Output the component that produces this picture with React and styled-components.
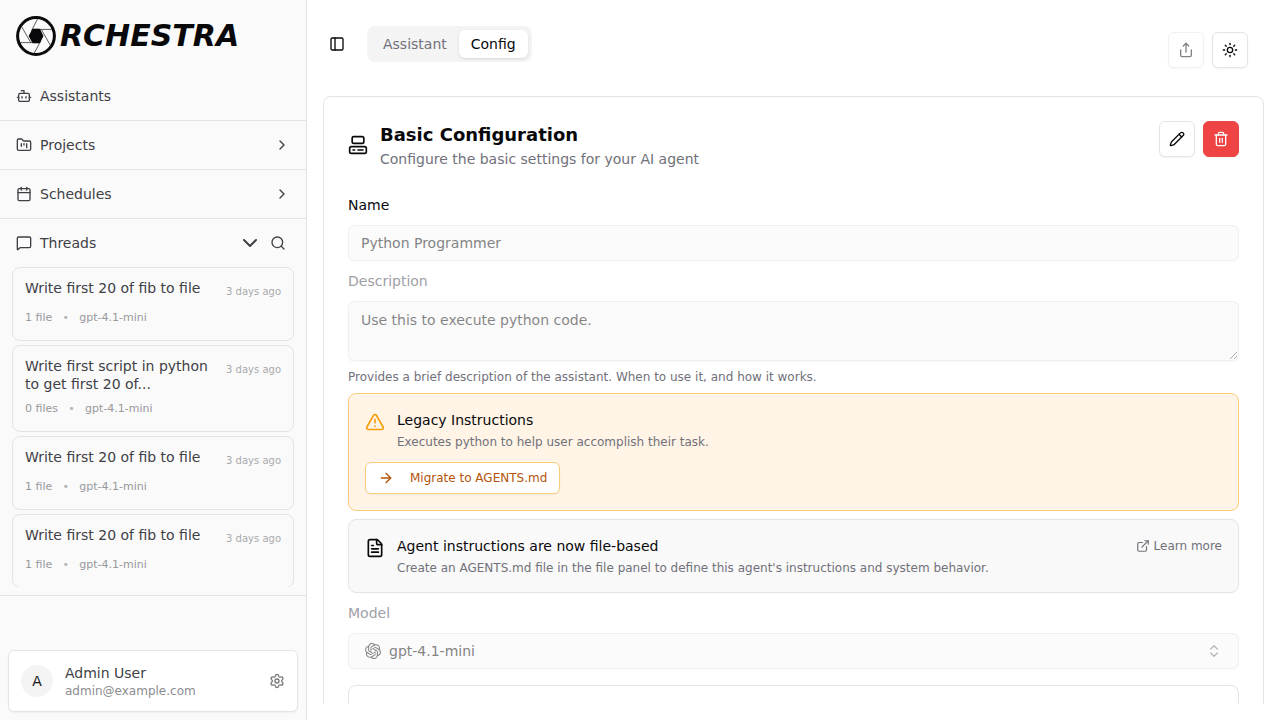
import React from 'react';
import styled, { createGlobalStyle, css } from 'styled-components';
import {
  Bot, FolderKanban, Calendar, MessageSquare, ChevronRight, ChevronDown, Search, Settings,
  PanelLeft, Share, Sun, Pencil, Trash2, Computer, TriangleAlert, ArrowRight, FileText,
  ExternalLink, ChevronsUpDown,
} from 'lucide-react';
import { SiOpenai } from 'react-icons/si';

const Global = createGlobalStyle`
  *, *::before, *::after { box-sizing: border-box; }
  body {
    margin: 0;
    font-family: 'DejaVu Sans', sans-serif;
    font-size: 14px;
    line-height: 20px;
    color: #09090b;
    background: #fff;
  }
  button, input, textarea { font: inherit; color: inherit; margin: 0; }
  svg { flex-shrink: 0; display: block; }
`;

const Shell = styled.div`
  display: flex;
  width: 1280px;
  height: 720px;
  overflow: hidden;
`;

const Sidebar = styled.aside`
  display: flex;
  flex-direction: column;
  width: 307px;
  flex-shrink: 0;
  background: #fafafa;
  border-right: 1px solid #e4e4e7;
  color: #3f3f46;
`;

const Brand = styled.div`
  display: flex;
  align-items: center;
  height: 72px;
  padding: 0 16px;
  gap: 4px;
  color: #09090b;
`;

const Wordmark = styled.span`
  font-size: 30px;
  line-height: 36px;
  font-weight: 700;
  font-style: italic;
`;

const NavRow = styled.div`
  display: flex;
  align-items: center;
  gap: 8px;
  height: ${(p) => (p.$ruled ? 49 : 48)}px;
  padding: 0 ${(p) => (p.$tools ? 20 : 16)}px 0 16px;
  border-top: ${(p) => (p.$ruled ? '1px solid #e4e4e7' : '0')};
`;

const NavLabel = styled.span`
  flex: 1;
`;

const ThreadList = styled.div`
  display: flex;
  flex-direction: column;
  gap: 4px;
  height: 320px;
  padding: 0 12px;
  overflow: hidden;
`;

const ThreadCard = styled.article`
  flex-shrink: 0;
  padding: 12px 12px 14px;
  border: 1px solid #e4e4e7;
  border-radius: 8px;
`;

const ThreadTop = styled.div`
  display: flex;
  justify-content: space-between;
  min-height: 22px;
`;

const ThreadTitle = styled.div`
  width: 190px;
  line-height: 17.5px;
`;

const ThreadTime = styled.span`
  font-size: 10px;
  line-height: 23px;
  height: 22px;
  color: #a9a9ac;
  white-space: nowrap;
`;

const ThreadMeta = styled.div`
  display: flex;
  align-items: center;
  gap: 8px;
  margin-top: 8px;
  height: 16px;
  font-size: 11px;
  line-height: 16px;
  color: #98989b;
`;

const Bullet = styled.span`
  width: 11px;
  text-align: center;
  color: #b4b4b7;
`;

const SidebarFooter = styled.div`
  flex: 1;
  display: flex;
  flex-direction: column;
  justify-content: flex-end;
  margin-top: 8px;
  padding: 8px;
  border-top: 1px solid #e4e4e7;
`;

const UserCard = styled.div`
  display: flex;
  align-items: center;
  gap: 12px;
  height: 62px;
  padding: 0 12px;
  background: #fff;
  border: 1px solid #e4e4e7;
  border-radius: 6px;
  box-shadow: 0 1px 2px rgba(0, 0, 0, 0.05);
`;

const Avatar = styled.div`
  display: grid;
  place-items: center;
  width: 32px;
  height: 32px;
  border-radius: 50%;
  background: #f4f4f4;
  color: #18181b;
`;

const UserText = styled.div`
  flex: 1;
`;

const UserMail = styled.div`
  font-size: 12px;
  line-height: 16px;
  color: #8c8c90;
`;

const Main = styled.main`
  flex: 1;
  display: flex;
  flex-direction: column;
  padding: 0 16px 16px;
  min-width: 0;
`;

const TopBar = styled.header`
  display: flex;
  justify-content: space-between;
  flex-shrink: 0;
  height: 96px;
  padding: 26px 16px 0 6px;
`;

const TopLeft = styled.div`
  display: flex;
  align-items: center;
  gap: 22px;
  height: 36px;
`;

const Tabs = styled.div`
  display: flex;
  padding: 4px;
  height: 36px;
  border-radius: 8px;
  background: #f4f4f4;
`;

const Tab = styled.button`
  height: 28px;
  padding: 0 12px;
  border: 0;
  border-radius: 6px;
  background: ${(p) => (p.$active ? '#fff' : 'transparent')};
  color: ${(p) => (p.$active ? '#09090b' : '#71717a')};
  box-shadow: ${(p) => (p.$active ? '0 1px 3px rgba(0,0,0,.1), 0 1px 2px -1px rgba(0,0,0,.1)' : 'none')};
`;

const ButtonGroup = styled.div`
  display: flex;
  gap: 8px;
  padding-top: ${(p) => p.$offset || 0}px;
`;

const IconButton = styled.button`
  display: grid;
  place-items: center;
  width: 36px;
  height: 36px;
  padding: 0;
  border: 1px solid ${(p) => (p.$danger ? '#ef4444' : '#e4e4e7')};
  border-radius: 6px;
  background: ${(p) => (p.$danger ? '#ef4444' : '#fff')};
  color: ${(p) => (p.$danger ? '#fafafa' : '#09090b')};
  box-shadow: 0 1px 2px rgba(0, 0, 0, 0.05);
  opacity: ${(p) => (p.$muted ? 0.5 : 1)};
`;

const Viewport = styled.div`
  flex: 1;
  min-height: 0;
  overflow: hidden;
`;

const Panel = styled.section`
  display: flex;
  flex-direction: column;
  min-height: 760px;
  padding: 24px;
  border: 1px solid #e4e4e7;
  border-radius: 8px;
`;

const PanelHeader = styled.div`
  display: flex;
  justify-content: space-between;
  height: 74px;
`;

const Heading = styled.div`
  display: flex;
  align-items: center;
  gap: 12px;
  height: 48px;
`;

const PanelTitle = styled.h2`
  margin: 0;
  font-size: 18px;
  line-height: 28px;
  font-weight: 700;
`;

const Subtitle = styled.div`
  color: #71717a;
`;

const Label = styled.label`
  display: block;
  height: 20px;
  margin-bottom: 10px;
  color: ${(p) => (p.$muted ? '#a0a0a6' : '#09090b')};
`;

const fieldBox = css`
  display: block;
  width: 100%;
  border: 1px solid #f0f0f1;
  border-radius: 6px;
  background: #fbfbfb;
  color: #848485;
  box-shadow: 0 1px 2px rgba(0, 0, 0, 0.025);
  outline: 0;
`;

const Input = styled.input`
  ${fieldBox}
  height: 36px;
  padding: 0 12px;
  margin-bottom: 10px;
`;

const TextArea = styled.textarea`
  ${fieldBox}
  height: 60px;
  padding: 8px 12px;
  margin-bottom: 8px;
  background: #f7f7f7;
  border-color: #e2e2e4;
  color: #09090b;
  box-shadow: 0 1px 2px rgba(0, 0, 0, 0.05);
  opacity: 0.5;
`;

const Help = styled.p`
  margin: 0 0 8px;
  font-size: 12px;
  line-height: 16px;
  color: #71717a;
`;

const Notice = styled.div`
  height: ${(p) => (p.$warn ? 118 : 74)}px;
  padding: 16px;
  margin-bottom: ${(p) => (p.$warn ? 8 : 10)}px;
  border: 1px solid ${(p) => (p.$warn ? '#fbcb7c' : '#e4e4e7')};
  border-radius: 8px;
  background: ${(p) => (p.$warn ? '#fff4e5' : '#f9f9f9')};
`;

const NoticeRow = styled.div`
  display: flex;
  gap: 12px;
  > svg { margin-top: 2px; }
`;

const NoticeBody = styled.div`
  flex: 1;
`;

const NoticeText = styled.div`
  margin-top: 4px;
  font-size: 12px;
  line-height: 16px;
  color: #71717a;
`;

const MigrateButton = styled.button`
  display: flex;
  align-items: center;
  gap: 16px;
  height: 32px;
  margin-top: 12px;
  padding: 0 12px;
  border: 1px solid #fbcb7c;
  border-radius: 6px;
  background: #fff;
  color: #b45309;
  font-size: 12px;
  line-height: 16px;
  box-shadow: 0 1px 2px rgba(0, 0, 0, 0.05);
`;

const LearnMore = styled.a`
  display: flex;
  align-items: center;
  gap: 4px;
  height: 20px;
  font-size: 12px;
  color: #71717a;
`;

const Select = styled.div`
  ${fieldBox}
  display: flex;
  align-items: center;
  gap: 8px;
  flex-shrink: 0;
  height: 36px;
  padding: 0 16px;
`;

const SelectValue = styled.span`
  flex: 1;
`;

const NextSection = styled.div`
  flex: 1;
  margin-top: 16px;
  border: 1px solid #e4e4e7;
  border-radius: 8px;
`;

const THREADS = [
  { title: 'Write first 20 of fib to file', files: '1 file' },
  { title: 'Write first script in python to get first 20 of...', files: '0 files' },
  { title: 'Write first 20 of fib to file', files: '1 file' },
  { title: 'Write first 20 of fib to file', files: '1 file' },
];

function ApertureMark() {
  return (
    <svg width="40" height="40" viewBox="0 0 40 40" fill="none">
      <circle cx="20" cy="20" r="18.4" stroke="#09090b" strokeWidth="3" />
      <path
        d="M21.7 2.6 15.4 15M36 13.4H17M34.4 29.3 25.2 13.4M18.2 37.3 24.8 24.7M4 26.6H23M5.7 10.8 14.8 26.5"
        stroke="#333"
        strokeWidth="0.8"
      />
      <path d="M17 13.6H23.4L26.6 20 23.4 26.4H17L13.6 20Z" fill="#09090b" stroke="#09090b" strokeWidth="1.6" strokeLinejoin="round" />
    </svg>
  );
}

function Thread({ title, files }) {
  return (
    <ThreadCard>
      <ThreadTop>
        <ThreadTitle>{title}</ThreadTitle>
        <ThreadTime>3 days ago</ThreadTime>
      </ThreadTop>
      <ThreadMeta>
        <span>{files}</span>
        <Bullet>•</Bullet>
        <span>gpt-4.1-mini</span>
      </ThreadMeta>
    </ThreadCard>
  );
}

export default function App() {
  return (
    <>
      <Global />
      <Shell>
        <Sidebar>
          <Brand>
            <ApertureMark />
            <Wordmark>RCHESTRA</Wordmark>
          </Brand>
          <NavRow>
            <Bot size={16} />
            <NavLabel>Assistants</NavLabel>
          </NavRow>
          <NavRow $ruled>
            <FolderKanban size={16} />
            <NavLabel>Projects</NavLabel>
            <ChevronRight size={16} />
          </NavRow>
          <NavRow $ruled>
            <Calendar size={16} />
            <NavLabel>Schedules</NavLabel>
            <ChevronRight size={16} />
          </NavRow>
          <NavRow $ruled $tools>
            <MessageSquare size={16} />
            <NavLabel>Threads</NavLabel>
            <ChevronDown size={24} />
            <Search size={16} />
          </NavRow>
          <ThreadList>
            {THREADS.map((t, i) => <Thread key={i} {...t} />)}
          </ThreadList>
          <SidebarFooter>
            <UserCard>
              <Avatar>A</Avatar>
              <UserText>
                <div>Admin User</div>
                <UserMail>admin@example.com</UserMail>
              </UserText>
              <Settings size={16} color="#77777b" />
            </UserCard>
          </SidebarFooter>
        </Sidebar>
        <Main>
          <TopBar>
            <TopLeft>
              <PanelLeft size={16} />
              <Tabs>
                <Tab>Assistant</Tab>
                <Tab $active>Config</Tab>
              </Tabs>
            </TopLeft>
            <ButtonGroup $offset={6}>
              <IconButton $muted aria-label="Share"><Share size={16} /></IconButton>
              <IconButton aria-label="Theme"><Sun size={16} /></IconButton>
            </ButtonGroup>
          </TopBar>
          <Viewport>
            <Panel>
              <PanelHeader>
                <Heading>
                  <Computer size={20} />
                  <div>
                    <PanelTitle>Basic Configuration</PanelTitle>
                    <Subtitle>Configure the basic settings for your AI agent</Subtitle>
                  </div>
                </Heading>
                <ButtonGroup>
                  <IconButton aria-label="Edit"><Pencil size={16} /></IconButton>
                  <IconButton $danger aria-label="Delete"><Trash2 size={16} /></IconButton>
                </ButtonGroup>
              </PanelHeader>
              <Label>Name</Label>
              <Input readOnly value="Python Programmer" />
              <Label $muted>Description</Label>
              <TextArea readOnly value="Use this to execute python code." />
              <Help>Provides a brief description of the assistant. When to use it, and how it works.</Help>
              <Notice $warn>
                <NoticeRow>
                  <TriangleAlert size={20} color="#f59e0b" />
                  <NoticeBody>
                    <div>Legacy Instructions</div>
                    <NoticeText>Executes python to help user accomplish their task.</NoticeText>
                  </NoticeBody>
                </NoticeRow>
                <MigrateButton>
                  <ArrowRight size={16} />
                  Migrate to AGENTS.md
                </MigrateButton>
              </Notice>
              <Notice>
                <NoticeRow>
                  <FileText size={20} />
                  <NoticeBody>
                    <div>Agent instructions are now file-based</div>
                    <NoticeText>Create an AGENTS.md file in the file panel to define this agent's instructions and system behavior.</NoticeText>
                  </NoticeBody>
                  <LearnMore>
                    <ExternalLink size={14} />
                    Learn more
                  </LearnMore>
                </NoticeRow>
              </Notice>
              <Label $muted>Model</Label>
              <Select>
                <SiOpenai size={16} />
                <SelectValue>gpt-4.1-mini</SelectValue>
                <ChevronsUpDown size={16} color="#b8b8b9" />
              </Select>
              <NextSection />
            </Panel>
          </Viewport>
        </Main>
      </Shell>
    </>
  );
}
